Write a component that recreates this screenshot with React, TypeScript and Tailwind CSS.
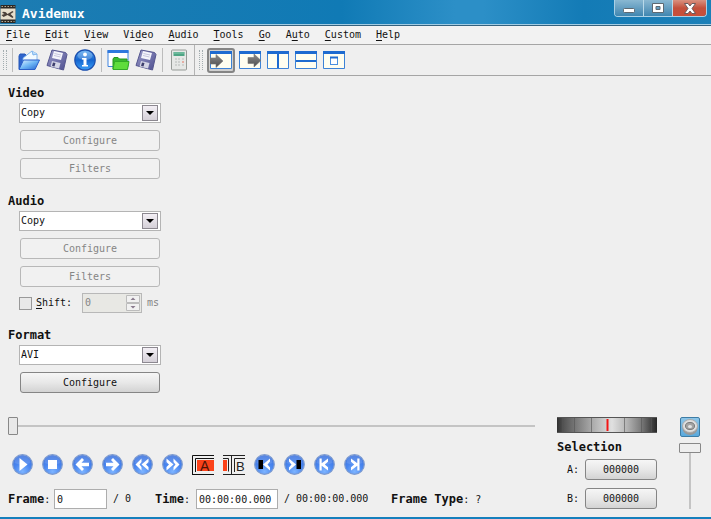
import React from "react";

const menus = [
  ["", "F", "ile"],
  ["", "E", "dit"],
  ["", "V", "iew"],
  ["Vi", "d", "eo"],
  ["", "A", "udio"],
  ["", "T", "ools"],
  ["", "G", "o"],
  ["A", "u", "to"],
  ["", "C", "ustom"],
  ["", "H", "elp"],
];

function Gradients() {
  return (
    <svg width="0" height="0" className="absolute" aria-hidden="true">
      <defs>
        <radialGradient id="orb" cx="50%" cy="85%" r="85%">
          <stop offset="0" stopColor="#7db4ff" />
          <stop offset="0.5" stopColor="#4a87f0" />
          <stop offset="1" stopColor="#3a70dc" />
        </radialGradient>
        <linearGradient id="info" x1="0" y1="0" x2="0" y2="1">
          <stop offset="0" stopColor="#58a9f2" />
          <stop offset="0.5" stopColor="#1465cf" />
          <stop offset="1" stopColor="#3ba0f8" />
        </linearGradient>
        <linearGradient id="folder" x1="0" y1="0" x2="1" y2="1">
          <stop offset="0" stopColor="#e4f4ff" />
          <stop offset="0.5" stopColor="#6db5f5" />
          <stop offset="1" stopColor="#2463cf" />
        </linearGradient>
        <linearGradient id="disk" x1="0" y1="0" x2="1" y2="1">
          <stop offset="0" stopColor="#9a9bca" />
          <stop offset="1" stopColor="#4f5090" />
        </linearGradient>
        <linearGradient id="arrow" x1="0" y1="0" x2="0" y2="1">
          <stop offset="0" stopColor="#8c8c8c" />
          <stop offset="1" stopColor="#4c4c4c" />
        </linearGradient>
      </defs>
    </svg>
  );
}

function OpenIcon() {
  return (
    <svg width="22" height="22" viewBox="0 0 22 22">
      <path d="M1 20V7l1-2h5l2 2h3v3L5 20z" fill="#2f64cc" stroke="#2456b8" />
      <path d="M5 9 14 2l5 3v8H5z" fill="#f2faff" stroke="#6aa7e8" strokeWidth="0.8" />
      <path d="m14 2 1 4 4-1" fill="#b9dcfb" stroke="#6aa7e8" strokeWidth="0.8" />
      <path d="M1 20.500 5.500 11h16L17 20.500z" fill="url(#folder)" stroke="#2a5fc9" strokeLinejoin="round" />
    </svg>
  );
}

function SaveIcon() {
  return (
    <svg width="22" height="22" viewBox="0 0 22 22">
      <path d="M6 1 19.500 3.500 21 5.500 17.500 21 1 16.500z" fill="url(#disk)" stroke="#55568f" strokeLinejoin="round" />
      <path d="m8 2 9 2-2 7-9-2z" fill="#f4f4fb" />
      <path d="m8.500 4.500 6.500 1.500M8 6.500l6.500 1.500" stroke="#b9b9d4" strokeWidth="0.8" />
      <path d="m6 12 8.500 2-1.500 5.500-8.500-2z" fill="#d5d6e6" />
      <path d="m7 13.500 2.500.6-1 3.400-2.500-.6z" fill="#3f406e" />
    </svg>
  );
}

function InfoIcon() {
  return (
    <svg width="22" height="22" viewBox="0 0 22 22">
      <circle cx="11" cy="11" r="10.200" fill="url(#info)" stroke="#1b4fae" strokeWidth="1.200" />
      <ellipse cx="11" cy="6.500" rx="7.500" ry="4.500" fill="#fff" opacity="0.22" />
      <circle cx="11" cy="5.500" r="1.900" fill="#fff" />
      <path d="M8 9h4.500v7H14v1.500H8V16h1.500v-5.500H8z" fill="#fff" />
    </svg>
  );
}

function OpenVideoIcon() {
  return (
    <svg width="23" height="22" viewBox="0 0 23 22">
      <path d="M1 1.500h20v16H1z" fill="#fff" stroke="#3f83df" />
      <path d="M.5 1h21v3H.5z" fill="#2f78dd" />
      <path d="M6 20V10l1-1.500h4l1.500 1.500H20v10z" fill="#39b82f" stroke="#28961f" />
      <path d="m6 20.500 1.500-8H22L20.500 20.500z" fill="#5fdc3c" stroke="#32aa26" strokeLinejoin="round" />
    </svg>
  );
}

function CalculatorIcon() {
  return (
    <svg width="16" height="22" viewBox="0 0 16 22">
      <rect x="0.500" y="1" width="15" height="20" rx="1" fill="#e6e8e6" stroke="#969b97" />
      <path d="M2.500 3h11v4h-11z" fill="#4ea584" />
      <path d="M2.500 4h11" stroke="#88cbb0" />
      <path d="M4 10h2M7 10h2M11 10h2M4 13h2M7 13h2M4 16h2M7 16h2M11 16h2" stroke="#c6c9c7" strokeWidth="1.500" />
      <path d="M11 13h2" stroke="#e59a8d" strokeWidth="1.500" />
    </svg>
  );
}

function ViewIcon({ kind }: { kind: string }) {
  return (
    <svg width="22" height="20" viewBox="0 0 22 20">
      <path d="M.5 1.500h21v17H.5z" fill="#fffef0" stroke="#3c82d6" />
      <path d="M0 1h22v3H0z" fill="#1e6bd0" />
      {kind === "input" && (
        <path d="M0 8h6V4.500l7 6.500-7 6.500V14H0z" fill="url(#arrow)" stroke="#777" strokeWidth="0.6" />
      )}
      {kind === "output" && (
        <path d="M9 7.500h6V4l7 6.500-7 6.500v-3.500H9z" fill="url(#arrow)" stroke="#777" strokeWidth="0.6" />
      )}
      {kind === "side" && <path d="M11 3v15" stroke="#1e6bd0" strokeWidth="2" />}
      {kind === "stack" && <path d="M1 11h20" stroke="#1e6bd0" strokeWidth="2" />}
      {kind === "small" && (
        <>
          <rect x="7.500" y="7.500" width="7" height="7" fill="#fff" stroke="#4a8fe0" />
          <path d="M7 7.500h8" stroke="#1e6bd0" strokeWidth="2" />
        </>
      )}
    </svg>
  );
}

function Grip() {
  return <span className="h-5 w-1 border-x border-dotted border-[#a3adb0]" />;
}

function Separator() {
  return <span className="h-6 w-px bg-[#bcbcbc]" />;
}

const orbShapes: Record<string, React.ReactNode> = {
  Play: <path d="m7.500 4 8 6.500-8 6.500z" />,
  Stop: <path d="M6 6h9v9H6z" />,
  "Previous frame": <path d="M3.500 10.500 10 4l2 2-2.500 2.700h7.500v3.600H9.500L12 15l-2 2z" />,
  "Next frame": <path d="M17.500 10.500 11 4 9 6l2.500 2.700H4v3.600h7.500L9 15l2 2z" />,
  "Previous key frame": <path d="m3.500 10.500 6-6v3.500l-2 2.500 2 2.500v3.500zM9.500 10.500l7-6v3.500l-2.500 2.500 2.500 2.500v3.500z" />,
  "Next key frame": <path d="m17.500 10.500-6-6v3.500l2 2.500-2 2.500v3.500zM11.500 10.500l-7-6v3.500l2.500 2.500-2.500 2.500v3.500z" />,
  "Previous black frame": (
    <>
      <path d="M16 4.500v3l-2.500 3 2.500 3v3l-7-6z" />
      <path d="M4.500 6h4.500v9H4.500z" fill="#000" />
    </>
  ),
  "Next black frame": (
    <>
      <path d="M5 4.500v3l2.500 3-2.500 3v3l7-6z" />
      <path d="M12.500 6H17v9h-4.500z" fill="#000" />
    </>
  ),
  "First frame": <path d="M5.500 4.500h2.200v4.800L14 4.500v3.300l-3.200 2.700 3.200 2.700v3.300l-6.300-4.800v4.800H5.500z" />,
  "Last frame": <path d="M15.500 4.500h-2.200v4.800L7 4.500v3.300l3.200 2.700L7 13.200v3.300l6.300-4.800v4.800h2.200z" />,
};

function Orb({ name }: { name: string }) {
  return (
    <button type="button" aria-label={name} className="size-[21px]">
      <svg width="21" height="21" viewBox="0 0 21 21">
        <circle cx="10.500" cy="10.500" r="9.800" fill="url(#orb)" stroke="#7f9ccf" strokeWidth="1.200" />
        <path d="M2.500 9a8 8 0 0 1 16 0q-8 3-16 0z" fill="#fff" opacity="0.13" />
        <g fill="#fff">{orbShapes[name]}</g>
      </svg>
    </button>
  );
}

function PushButton({ children, disabled = false }: { children: React.ReactNode; disabled?: boolean }) {
  return (
    <button
      type="button"
      disabled={disabled}
      className="h-[21px] w-full rounded-[3px] border border-[#858585] bg-linear-to-b from-[#f6f6f6] via-[#e8e8e8] to-[#d3d3d3] text-center leading-4 disabled:border-[#b8b8b8] disabled:bg-[#f1f1f1] disabled:bg-none disabled:text-[#858585]"
    >
      {children}
    </button>
  );
}

function Combo({ label, value }: { label: string; value: string }) {
  return (
    <div className="grid h-5 w-[142px] grid-cols-[1fr_18px] border border-[#b4b4b4] bg-white">
      <select
        aria-label={label}
        className="col-span-2 col-start-1 row-start-1 h-full appearance-none bg-transparent pl-px leading-4"
      >
        <option>{value}</option>
      </select>
      <span className="pointer-events-none col-start-2 row-start-1 my-px mr-0.5 flex items-center justify-center border border-[#8c8890] bg-linear-to-b from-[#f3eff5] to-[#d5d0d8]">
        <svg width="8" height="4" viewBox="0 0 8 4">
          <path d="M0 0h8L4 4z" />
        </svg>
      </span>
    </div>
  );
}

function CodecPanel({ title }: { title: string }) {
  return (
    <section>
      <h2 className="text-[12px] leading-4 font-bold">{title}</h2>
      <div className="mt-0.5 ml-[11px] flex w-[142px] flex-col gap-[7px]">
        <Combo label={title} value="Copy" />
        <div className="flex flex-col gap-[7px] px-px">
          <PushButton disabled>Configure</PushButton>
          <PushButton disabled>Filters</PushButton>
        </div>
      </div>
    </section>
  );
}

function TitleBar() {
  return (
    <header className="border-b border-[#35627e]">
      <div className="flex h-[25px] items-start justify-between border-b border-[#a3cde4] bg-[linear-gradient(90deg,#1d7cb2,#107ab5_48%,#2c8fc7_64%,#2c8fc7_68%,#137bb6_82%,#1c80b8)]">
        <div className="flex items-center gap-1.5 pt-1">
          <svg width="16" height="18" viewBox="0 0 15 18">
            <path d="M0 0h15v18H0z" fill="#2d2925" />
            <path d="M0 3.500h15v11H0z" fill="#e6dfcc" />
            <path d="M2 7q3-1 5 2l5-3 1 1-3 2 3 3-1 1-5-3-4 2-2-2 3-1-2-1z" fill="#494039" />
            <path d="M1 1.500h13M1 16.500h13" stroke="#b5aa94" strokeDasharray="1.500 1.500" />
          </svg>
          <h1 className="text-[13px] leading-5 font-bold text-white">Avidemux</h1>
        </div>
        <div className="mr-1 flex h-[17px] overflow-hidden rounded-b-[4px] border border-t-0 border-[#a9d0e6]">
          <button type="button" aria-label="Minimize" className="flex w-[29px] items-center justify-center border-r border-[#b9d9e9] bg-linear-to-b from-[#8ab8d2] to-[#3f86b0]">
            <svg width="12" height="12" viewBox="0 0 12 12">
              <rect x="0.500" y="6.500" width="11" height="4" rx="1" fill="#fff" stroke="#5d6972" />
            </svg>
          </button>
          <button type="button" aria-label="Maximize" className="flex w-[29px] items-center justify-center border-r border-[#b9d9e9] bg-linear-to-b from-[#8ab8d2] to-[#3f86b0]">
            <svg width="12" height="10" viewBox="0 0 12 10">
              <path d="M.5.500h11v9H.5zM4 3.500v3h4v-3z" fill="#fff" fillRule="evenodd" stroke="#5d6972" />
            </svg>
          </button>
          <button type="button" aria-label="Close" className="flex w-[33px] items-center justify-center bg-linear-to-b from-[#d99180] via-[#c3503c] to-[#c74f3a]">
            <svg width="12" height="11" viewBox="0 0 12 11">
              <path d="M.5.500h3.500l2 2.500 2-2.500h3.500L8 5.500l3.500 5H8L6 8l-2 2.500H.5L4 5.500z" fill="#fff" stroke="#5d5358" strokeWidth="0.900" />
            </svg>
          </button>
        </div>
      </div>
    </header>
  );
}

function ToolBar() {
  return (
    <div role="toolbar" className="flex h-[31px] items-center border-b border-[#a5a5a5]">
      <div className="flex h-full items-center gap-[5px] border-r border-[#b4b4b4] pr-[7px] pl-[3px]">
        <Grip />
        <Separator />
        <div className="flex items-center gap-1.5">
          <button type="button" aria-label="Open"><OpenIcon /></button>
          <button type="button" aria-label="Save"><SaveIcon /></button>
          <button type="button" aria-label="Information"><InfoIcon /></button>
        </div>
        <Separator />
        <div className="flex items-center gap-[5px]">
          <button type="button" aria-label="Open video"><OpenVideoIcon /></button>
          <button type="button" aria-label="Save video"><SaveIcon /></button>
        </div>
        <Separator />
        <button type="button" aria-label="Calculator" className="pl-[3px]"><CalculatorIcon /></button>
      </div>
      <div className="flex items-center gap-1 pl-1">
        <Grip />
        <button type="button" aria-label="Input" aria-pressed="true" className="flex h-[25px] w-7 items-center justify-center rounded-[3px] border-2 border-[#858585] bg-[#d0d0d0]">
          <ViewIcon kind="input" />
        </button>
        <div className="flex items-center gap-1.5">
          <button type="button" aria-label="Output"><ViewIcon kind="output" /></button>
          <button type="button" aria-label="Side by side"><ViewIcon kind="side" /></button>
          <button type="button" aria-label="Top and bottom"><ViewIcon kind="stack" /></button>
          <button type="button" aria-label="Separate"><ViewIcon kind="small" /></button>
        </div>
      </div>
    </div>
  );
}

function MarkerButton({ mark }: { mark: string }) {
  return (
    <button type="button" aria-label={"Set marker " + mark} className="w-[22px]">
      <svg width="22" height="20" viewBox="0 0 22 20" fontFamily="Liberation Sans, sans-serif">
        {mark === "A" ? (
          <>
            <path d="M.5 19V.500H22M3.500 17V3.500H22" fill="none" stroke="#111" />
            <path d="M0 19.500h22" stroke="#111" />
            <path d="M5 5h17v11H5z" fill="#fb4219" />
            <text x="8" y="15.500" fontSize="14" fill="#4a1408">A</text>
          </>
        ) : (
          <>
            <path d="M0 .5h22M0 19.500h22M0 3.500h5.500v13M8.500 1v18M11.500 17V3.500H22" fill="none" stroke="#222" />
            <path d="M0 5h4v11H0z" fill="#fb4219" />
            <text x="13" y="15.500" fontSize="13" fill="#222">B</text>
          </>
        )}
      </svg>
    </button>
  );
}

function Transport() {
  return (
    <div className="flex items-center gap-[9px] pl-1">
      {["Play", "Stop", "Previous frame", "Next frame", "Previous key frame", "Next key frame"].map((n) => (
        <Orb key={n} name={n} />
      ))}
      <MarkerButton mark="A" />
      <MarkerButton mark="B" />
      {["Previous black frame", "Next black frame", "First frame", "Last frame"].map((n) => (
        <Orb key={n} name={n} />
      ))}
    </div>
  );
}

function Status() {
  return (
    <div className="flex h-5 items-center whitespace-pre">
      <label htmlFor="frame" className="w-[46px]">
        <b className="text-[12px]">Frame</b>:
      </label>
      <input id="frame" defaultValue="0" className="h-5 w-[53px] border border-[#adadad] bg-white px-0.5" />
      <span className="w-12 pl-1.5">/ 0</span>
      <label htmlFor="time" className="w-[41px]">
        <b className="text-[12px]">Time</b>:
      </label>
      <input id="time" defaultValue="00:00:00.000" className="h-5 w-[82px] border border-[#adadad] bg-white px-0.5" />
      <span className="w-[113px] pl-1.5">/ 00:00:00.000</span>
      <span>
        <b className="text-[12px]">Frame Type</b>: ?
      </span>
    </div>
  );
}

function JogWheel() {
  return (
    <svg width="100" height="16" viewBox="0 0 100 16" role="img" aria-label="Jog">
      <defs>
        <linearGradient id="wheel">
          <stop offset="0" stopColor="#303030" />
          <stop offset="0.070" stopColor="#555" />
          <stop offset="0.180" stopColor="#777" />
          <stop offset="0.350" stopColor="#aaa" />
          <stop offset="0.550" stopColor="#e0e0e0" />
          <stop offset="0.700" stopColor="#b4b4b4" />
          <stop offset="0.850" stopColor="#777" />
          <stop offset="1" stopColor="#262626" />
        </linearGradient>
      </defs>
      <path d="M0 0h100v16H0z" fill="url(#wheel)" />
      <path d="M0 .5h100M0 15.500h100" stroke="#555" />
      <path d="M5.500 1v14M17.500 1v14M34.500 1v14M67.500 1v14M84.500 1v14M94.500 1v14" stroke="#555" opacity="0.600" />
      <path d="M50.500 2v12" stroke="#f21616" strokeWidth="2" />
    </svg>
  );
}

function Selection() {
  return (
    <div className="w-[100px]">
      <JogWheel />
      <h2 className="mt-1.5 text-[12px] leading-4 font-bold">Selection</h2>
      <div className="mt-1 grid grid-cols-[18px_72px] items-center gap-y-2 pl-[10px]">
        <span>A:</span>
        <PushButton>000000</PushButton>
        <span>B:</span>
        <PushButton>000000</PushButton>
      </div>
    </div>
  );
}

function Volume() {
  return (
    <div className="flex w-[22px] flex-col items-center gap-1.5">
      <button type="button" aria-label="Mute" className="size-5 rounded-[2px] border border-[#3d7ca5] bg-linear-to-b from-[#8cc5e8] to-[#5ba9dc]">
        <svg width="18" height="18" viewBox="0 0 18 18">
          <ellipse cx="9" cy="10" rx="7.500" ry="7" fill="#999" />
          <ellipse cx="9" cy="8" rx="7.500" ry="6.500" fill="#dedede" stroke="#aaa" />
          <ellipse cx="9" cy="8" rx="4.500" ry="3.500" fill="#a4a4a4" stroke="#777" />
          <ellipse cx="9" cy="8.500" rx="2" ry="1.500" fill="#e5e5e5" />
        </svg>
      </button>
      <input
        type="range"
        aria-label="Volume"
        defaultValue={100}
        className="h-[66px] w-[22px] appearance-none bg-transparent bg-[linear-gradient(#c4c4c4,#c4c4c4)] bg-[length:2px_100%] bg-center bg-no-repeat [direction:rtl] [writing-mode:vertical-lr] [&::-webkit-slider-thumb]:h-[10px] [&::-webkit-slider-thumb]:w-[22px] [&::-webkit-slider-thumb]:appearance-none [&::-webkit-slider-thumb]:rounded-[1px] [&::-webkit-slider-thumb]:border [&::-webkit-slider-thumb]:border-[#888888] [&::-webkit-slider-thumb]:bg-[#eeeeee]"
      />
    </div>
  );
}

export default function App() {
  return (
    <div className="flex min-h-screen flex-col border-b-2 border-[#1680bd] bg-[#efefef] font-['DejaVu_Sans_Mono','Liberation_Mono',monospace] text-[10px] leading-4 text-[#111111]">
      <Gradients />
      <TitleBar />
      <nav className="flex h-[19px] items-center gap-[15px] border-b border-[#a5a5a5] bg-[#f2f2f2] pl-1.5">
        {menus.map(([before, key, after]) => (
          <button type="button" key={before + key + after}>
            {before}
            <span className="underline underline-offset-2">{key}</span>
            {after}
          </button>
        ))}
      </nav>
      <ToolBar />

      <main className="flex flex-1 flex-col pt-[9px] pr-[10px] pl-2">
        <div className="flex flex-col gap-[14px]">
          <CodecPanel title="Video" />
          <div className="flex flex-col gap-1.5">
            <CodecPanel title="Audio" />
            <div className="ml-[11px] flex h-5 items-center text-[#858585]">
              <label className="flex w-[63px] items-center gap-1 text-[#111111]">
                <input type="checkbox" className="size-[13px] appearance-none border border-[#999999] bg-[#e9e9e9]" />
                <span>
                  <span className="underline underline-offset-2">S</span>hift:
                </span>
              </label>
              <div className="flex h-5 w-[60px] items-center border border-[#b8b8b8] bg-[#e8e8e4]">
                <input aria-label="Shift" disabled defaultValue="0" className="w-0 flex-1 px-0.5" />
                <svg width="15" height="18" viewBox="0 0 15 18">
                  <path d="M.5 1.500h13v7H.5zM.5 9.500h13v7H.5z" fill="#f1f1f1" stroke="#bcbcbc" />
                  <path d="M4.500 6h5L7 3.500zM4.500 12h5L7 14.500z" fill="#8a7b8e" />
                </svg>
              </div>
              <span className="pl-[5px]">ms</span>
            </div>
          </div>
          <section>
            <h2 className="text-[12px] leading-4 font-bold">Format</h2>
            <div className="mt-0.5 ml-[11px] flex w-[142px] flex-col gap-[7px]">
              <Combo label="Format" value="AVI" />
              <div className="px-px">
                <PushButton>Configure</PushButton>
              </div>
            </div>
          </section>
        </div>

        <footer className="mt-auto flex gap-[22px] pb-2">
          <div className="flex flex-1 flex-col justify-between">
            <input
              type="range"
              aria-label="Position"
              defaultValue={0}
              className="h-[18px] w-full appearance-none bg-transparent bg-[linear-gradient(#c4c4c4,#c4c4c4)] bg-[length:100%_2px] bg-center bg-no-repeat [&::-webkit-slider-thumb]:h-[18px] [&::-webkit-slider-thumb]:w-[10px] [&::-webkit-slider-thumb]:appearance-none [&::-webkit-slider-thumb]:rounded-[1px] [&::-webkit-slider-thumb]:border [&::-webkit-slider-thumb]:border-[#888888] [&::-webkit-slider-thumb]:bg-[#e8e8e8]"
            />
            <div className="flex flex-col gap-[14px]">
              <Transport />
              <Status />
            </div>
          </div>
          <Selection />
          <Volume />
        </footer>
      </main>
    </div>
  );
}
